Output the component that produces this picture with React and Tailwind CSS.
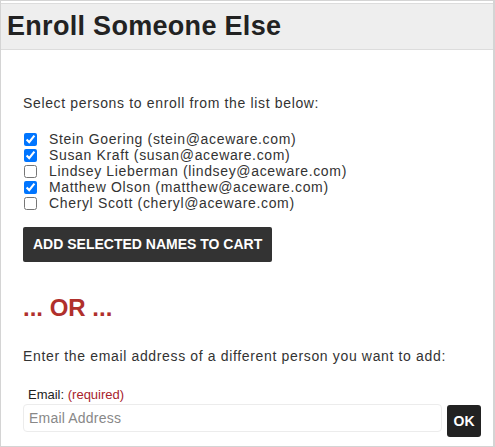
import { useState } from 'react';

const people = [
  { name: 'Stein Goering', email: 'stein@aceware.com', checked: true },
  { name: 'Susan Kraft', email: 'susan@aceware.com', checked: true },
  { name: 'Lindsey Lieberman', email: 'lindsey@aceware.com', checked: false },
  { name: 'Matthew Olson', email: 'matthew@aceware.com', checked: true },
  { name: 'Cheryl Scott', email: 'cheryl@aceware.com', checked: false },
];

export default function App() {
  const [selected, setSelected] = useState(people.map((p) => p.checked));

  const toggle = (i) => {
    setSelected((prev) => prev.map((v, idx) => (idx === i ? !v : v)));
  };

  return (
    <div className="w-[495px] h-[447px] bg-white border border-[#d4d4d4] border-r-2 pt-[2px] font-['Liberation_Sans',Arial,sans-serif] text-[#333] overflow-hidden">
      {/* Header */}
      <div className="h-[47px] bg-[#eeeeee] border-y border-[#dcdcdc] flex items-center pl-[6px]">
        <h1 className="text-[27px] font-bold tracking-[0.3px] text-[#222] leading-none">
          Enroll Someone Else
        </h1>
      </div>

      <div className="pl-[22px] pr-[12px]">
        <p className="mt-[45px] text-[14px] tracking-[0.65px] leading-[16px]">
          Select persons to enroll from the list below:
        </p>

        {/* Person list */}
        <div className="mt-[20px] flex flex-col">
          {people.map((p, i) => (
            <label key={p.email} className="flex items-center h-[16px] text-[14px] tracking-[0.65px] leading-[16px]">
              <input
                type="checkbox"
                checked={selected[i]}
                onChange={() => toggle(i)}
                className="w-[13px] h-[13px] m-0 ml-[1px] accent-[#0075ff]"
              />
              <span className="ml-[12px]">
                {p.name} ({p.email})
              </span>
            </label>
          ))}
        </div>

        <button
          type="button"
          className="mt-[16px] h-[35px] px-[10px] bg-[#333333] text-white text-[14px] font-bold rounded-[2px]"
        >
          ADD SELECTED NAMES TO CART
        </button>

        <div className="mt-[34px] text-[24px] font-bold text-[#b0302c] leading-none">
          ... OR ...
        </div>

        <p className="mt-[28px] text-[14px] tracking-[0.65px] leading-[16px]">
          Enter the email address of a different person you want to add:
        </p>

        <div className="mt-[24px] pl-[5px] text-[13px] leading-[14px]">
          <span className="text-[#222]">Email:</span>{' '}
          <span className="text-[#a8232b]">(required)</span>
        </div>

        <div className="mt-[2px] flex items-start gap-[5px]">
          <input
            type="text"
            placeholder="Email Address"
            className="w-[420px] h-[28px] px-[5px] border border-[#ececec] rounded-[4px] text-[14px] tracking-[0.2px] placeholder:text-[#888] outline-none"
          />
          <button
            type="button"
            className="mt-[1px] w-[34px] h-[32px] bg-[#222] text-white text-[14px] font-bold rounded-[3px]"
          >
            OK
          </button>
        </div>
      </div>
    </div>
  );
}
